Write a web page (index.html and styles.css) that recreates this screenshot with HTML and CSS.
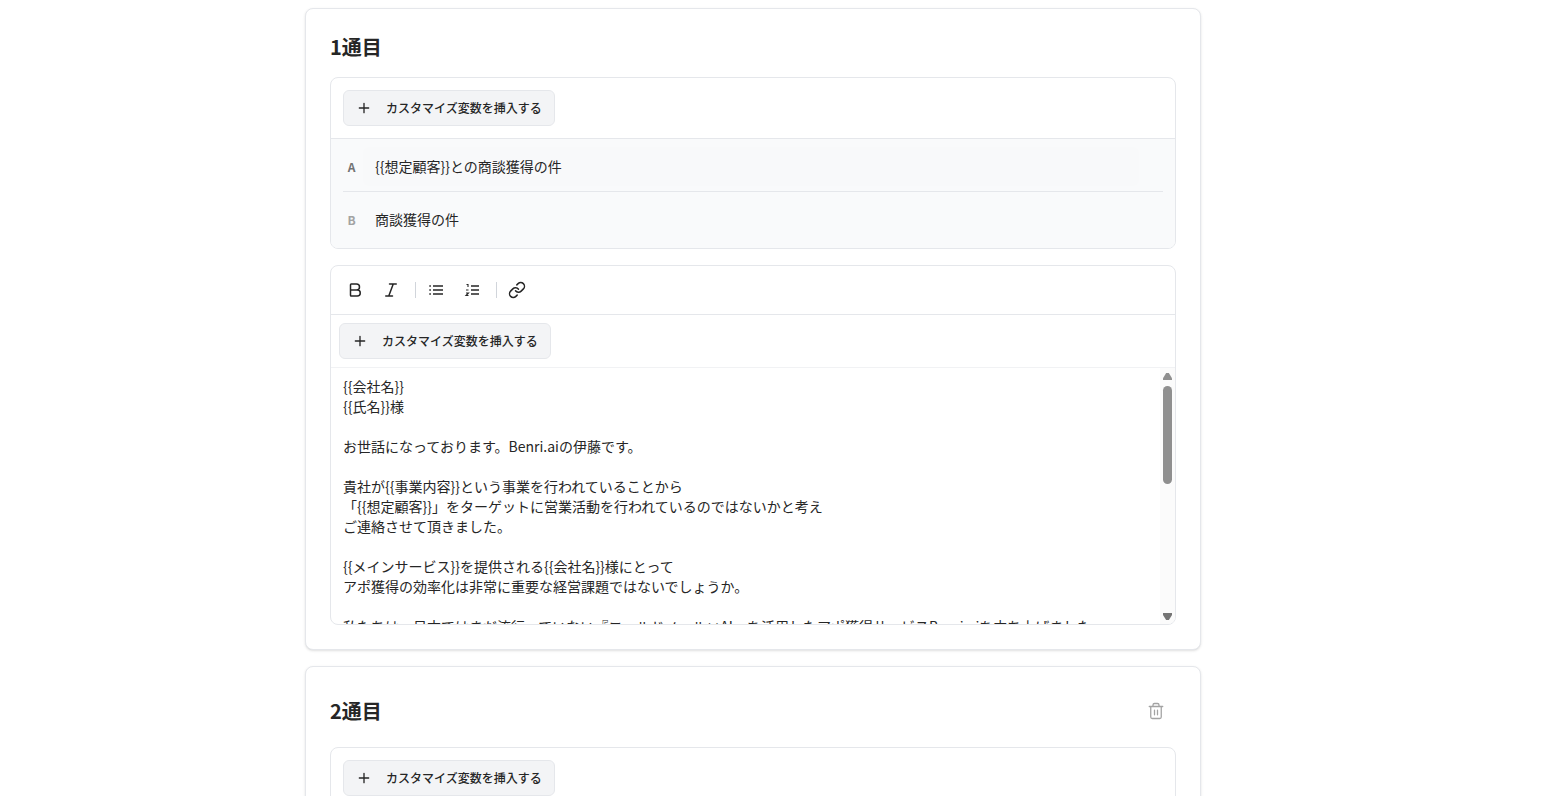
FILE: index.html
```html
<!DOCTYPE html>
<html lang="ja">
<head>
<meta charset="utf-8">
<title>メール設定</title>
<link rel="stylesheet" href="styles.css">
</head>
<body>
<main class="page">
  <section class="card">
    <div class="card-head"><h2 class="card-title">1通目</h2></div>
    <div class="subject-box">
      <div class="var-bar">
        <button class="var-btn"><svg class="plus" viewBox="0 0 24 24"><path d="M5 12h14M12 5v14"/></svg><span>カスタマイズ変数を挿入する</span></button>
      </div>
      <div class="subject-rows">
        <div class="subject-row row-a"><span class="ab">A</span><div class="subject-input shifted">{{想定顧客}}との商談獲得の件</div></div>
        <div class="subject-row row-b"><span class="ab ab-b">B</span><div class="subject-input plain">商談獲得の件</div></div>
      </div>
    </div>
    <div class="editor">
      <div class="format-bar">
        <span class="fmt"><svg viewBox="0 0 24 24"><path d="M6 12h9a4 4 0 0 1 0 8H7a1 1 0 0 1-1-1V5a1 1 0 0 1 1-1h7a4 4 0 0 1 0 8"/></svg></span>
        <span class="fmt"><svg viewBox="0 0 24 24"><path d="M19 4h-9M14 20H5M15 4 9 20"/></svg></span>
        <span class="sep"></span>
        <span class="fmt"><svg class="list-icon" viewBox="0 0 18 18"><path d="M6 5h10M6 9h10M6 13h10M2.300 5h1.600M2.300 9h1.600M2.300 13h1.600"/></svg></span>
        <span class="fmt"><svg class="list-icon" viewBox="0 0 18 18"><path d="M8 5h8M8 9h8M8 13h8"/><path class="num" d="M3.500 3.500h1.500v2.500M3 9h2.500M3 12h2.500l-2.500 2.500h2.500"/></svg></span>
        <span class="sep"></span>
        <span class="fmt"><svg viewBox="0 0 24 24"><path d="M10 13a5 5 0 0 0 7.540.54l3-3a5 5 0 0 0-7.070-7.070l-1.720 1.710"/><path d="M14 11a5 5 0 0 0-7.540-.54l-3 3a5 5 0 0 0 7.070 7.070l1.710-1.710"/></svg></span>
      </div>
      <div class="editor-vars">
        <button class="var-btn"><svg class="plus" viewBox="0 0 24 24"><path d="M5 12h14M12 5v14"/></svg><span>カスタマイズ変数を挿入する</span></button>
      </div>
      <div class="editor-body">
        <div class="editor-text">
          <p>{{会社名}}</p>
          <p>{{氏名}}様</p>
          <p class="blank"></p>
          <p>お世話になっております。Benri.aiの伊藤です。</p>
          <p class="blank"></p>
          <p>貴社が{{事業内容}}という事業を行われていることから</p>
          <p>「{{想定顧客}}」をターゲットに営業活動を行われているのではないかと考え</p>
          <p>ご連絡させて頂きました。</p>
          <p class="blank"></p>
          <p>{{メインサービス}}を提供される{{会社名}}様にとって</p>
          <p>アポ獲得の効率化は非常に重要な経営課題ではないでしょうか。</p>
          <p class="blank"></p>
          <p>私たちは、日本ではまだ流行っていない『コールドメール×AI』を活用したアポ獲得サービスBenri.aiを立ち上げました。</p>
        </div>
        <div class="scrollbar">
          <span class="arrow arrow-up"></span>
          <span class="thumb"></span>
          <span class="arrow arrow-down"></span>
        </div>
      </div>
    </div>
  </section>
  <section class="card">
    <div class="card-head head-tall">
      <h2 class="card-title">2通目</h2>
      <span class="trash"><svg viewBox="0 0 24 24"><path d="M3 6h18M19 6v14a2 2 0 0 1-2 2H7a2 2 0 0 1-2-2V6M8 6V4a2 2 0 0 1 2-2h4a2 2 0 0 1 2 2v2M10 11v6M14 11v6"/></svg></span>
    </div>
    <div class="subject-box">
      <div class="var-bar">
        <button class="var-btn"><svg class="plus" viewBox="0 0 24 24"><path d="M5 12h14M12 5v14"/></svg><span>カスタマイズ変数を挿入する</span></button>
      </div>
    </div>
  </section>
</main>
</body>
</html>
```
FILE: styles.css
```css
* { box-sizing: border-box; }
html, body { margin: 0; height: 796px; overflow: hidden; background: #fff; }
body { font-family: "Noto Sans CJK JP", "Noto Sans", sans-serif; color: #262626; }
.page { display: flex; flex-direction: column; gap: 16px; width: 896px; margin-left: 305px; padding-top: 8px; }
.card { flex: none; background: #fff; border: 1px solid #e5e7eb; border-radius: 8px; padding: 24px; box-shadow: 0 1px 3px rgba(0,0,0,.1), 0 1px 2px -1px rgba(0,0,0,.1); }
.card-head { display: flex; align-items: center; justify-content: space-between; height: 28px; margin-bottom: 16px; }
.head-tall { height: 40px; }
.card-title { margin: 0; font-size: 20px; line-height: 28px; font-weight: 700; color: #262626; }
.trash { width: 40px; height: 40px; display: flex; align-items: center; justify-content: center; }
.trash svg { width: 18px; height: 18px; fill: none; stroke: #a3a3a3; stroke-width: 1.7; stroke-linecap: round; stroke-linejoin: round; }
.subject-box { border: 1px solid #e5e7eb; border-radius: 8px; overflow: hidden; background: #fff; }
.var-bar { padding: 12px; }
.var-btn { display: flex; align-items: center; gap: 14px; height: 36px; width: 212px; padding: 0 12px; background: #f3f4f6; border: 1px solid #e5e7eb; border-radius: 6px; font-family: inherit; font-size: 12px; font-weight: 500; color: #262626; white-space: nowrap; }
.var-btn span { padding-bottom: 1px; }
.plus { width: 16px; height: 16px; flex: none; fill: none; stroke: #262626; stroke-width: 2; stroke-linecap: round; stroke-linejoin: round; }
.subject-rows { background: #f9fafb; border-top: 1px solid #e5e7eb; padding: 0 12px; }
.subject-row { display: flex; align-items: center; }
.row-a { height: 53px; border-bottom: 1px solid #e5e7eb; padding-top: 3px; }
.row-b { height: 56px; padding-bottom: 2px; }
.ab { width: 17px; flex: none; text-align: center; font-size: 12px; font-weight: 700; color: #737373; }
.ab-b { color: #a3a3a3; }
.subject-input { margin-left: 3px; width: 776px; height: 39px; padding: 0 12px; display: flex; align-items: center; font-size: 14px; line-height: 20px; background: #f8f9fa; border-radius: 6px; }
.subject-input.shifted { padding-bottom: 2px; }
.subject-input.plain { background: transparent; }
.editor { margin-top: 16px; height: 360px; display: flex; flex-direction: column; border: 1px solid #e5e7eb; border-radius: 8px; overflow: hidden; background: #fff; }
.format-bar { flex: none; display: flex; align-items: center; height: 49px; padding: 0 6px; border-bottom: 1px solid #e5e7eb; }
.fmt { width: 36px; height: 36px; display: flex; align-items: center; justify-content: center; }
.fmt svg { width: 18px; height: 18px; fill: none; stroke: #262626; stroke-width: 2; stroke-linecap: round; stroke-linejoin: round; }
.fmt .list-icon { stroke-width: 1.5; stroke-linecap: butt; stroke-linejoin: miter; }
.list-icon .num { stroke-width: 1.1; }
.sep { width: 1px; height: 16px; margin: 0 2px 0 6px; background: #d1d5db; }
.editor-vars { flex: none; padding: 8px; height: 53px; border-bottom: 1px solid #f1f2f4; }
.editor-body { flex: 1; min-height: 0; display: flex; overflow: hidden; }
.editor-text { flex: 1; min-width: 0; padding: 8px 12px; font-size: 14px; line-height: 20px; color: #262626; white-space: nowrap; overflow: hidden; }
.editor-text p { margin: 0; }
.blank { height: 20px; }
.scrollbar { flex: none; width: 15px; display: flex; flex-direction: column; align-items: center; background: #fbfbfb; padding: 5px 0 4px; }
.arrow { flex: none; width: 9px; height: 7px; }
.arrow-up { background: #8f8f8f; clip-path: polygon(35% 0, 65% 0, 100% 75%, 100% 100%, 0 100%, 0 75%); }
.arrow-down { background: #757575; margin-top: auto; clip-path: polygon(0 0, 100% 0, 100% 30%, 65% 100%, 35% 100%, 0 30%); }
.thumb { flex: none; width: 9px; height: 98px; margin-top: 6px; border-radius: 5px; background: #8f8f8f; }
```
